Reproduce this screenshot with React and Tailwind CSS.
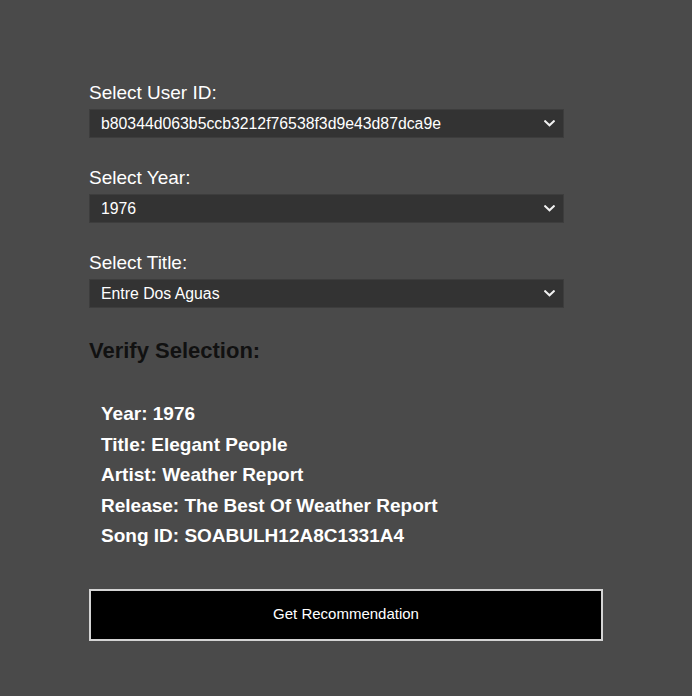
import React, { useState } from 'react';

function Chevron() {
  return (
    <svg width="11" height="7" viewBox="0 0 11 7" className="shrink-0">
      <path d="M1.2 1.2 L5.5 5.3 L9.8 1.2" fill="none" stroke="#f2f2f2" strokeWidth="2" strokeLinecap="square" />
    </svg>
  );
}

function FakeSelect({ value }) {
  return (
    <div className="w-[475px] h-[29px] bg-[#333333] border border-[#3d3d3d] flex items-center justify-between pl-[11px] pr-[8px] text-[15.8px] text-white">
      <span>{value}</span>
      <Chevron />
    </div>
  );
}

function Field({ label, value }) {
  return (
    <div className="flex flex-col">
      <label className="text-[19px] leading-[22px] text-white mt-[1px] mb-[5px]">{label}</label>
      <FakeSelect value={value} />
    </div>
  );
}

export default function App() {
  const [song] = useState({
    year: '1976',
    title: 'Elegant People',
    artist: 'Weather Report',
    release: 'The Best Of Weather Report',
    id: 'SOABULH12A8C1331A4',
  });

  return (
    <div
      className="w-[692px] h-[696px] bg-[#4a4a4a] pl-[89px] pt-[81px]"
      style={{ fontFamily: '"Liberation Sans", Arial, sans-serif' }}
    >
      <div className="flex flex-col gap-[28px]">
        <Field label="Select User ID:" value="b80344d063b5ccb3212f76538f3d9e43d87dca9e" />
        <Field label="Select Year:" value="1976" />
        <Field label="Select Title:" value="Entre Dos Aguas" />
      </div>

      <h2 className="mt-[30px] text-[22px] leading-[25px] font-bold text-[#111111]">Verify Selection:</h2>

      <div className="mt-[36px] pl-[12px] text-[19px] leading-[30.5px] font-bold text-white">
        <p>Year: {song.year}</p>
        <p>Title: {song.title}</p>
        <p>Artist: {song.artist}</p>
        <p>Release: {song.release}</p>
        <p>Song ID: {song.id}</p>
      </div>

      <button className="mt-[37px] w-[514px] h-[52px] bg-black border-2 border-[#d4d4d4] text-white text-[15px] flex items-center justify-center">
        Get Recommendation
      </button>
    </div>
  );
}
